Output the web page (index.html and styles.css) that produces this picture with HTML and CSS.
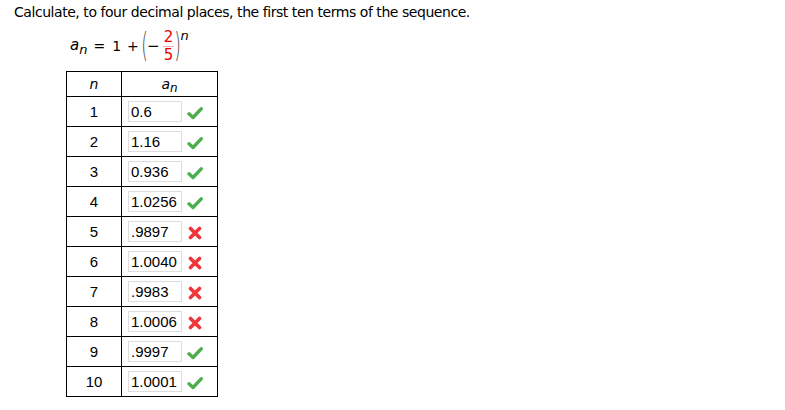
FILE: index.html
```html
<!DOCTYPE html>
<html>
<head>
<meta charset="utf-8">
<link rel="stylesheet" href="styles.css">
</head>
<body>
<p class="prompt">Calculate, to four decimal places, the first ten terms of the sequence.</p>
<div class="formula">
  <span class="var">a<sub>n</sub></span>
  <span class="op eq">=</span>
  <span class="one">1</span>
  <span class="op plus">+</span>
  <span class="paren lp">(</span>
  <span class="minus">−</span>
  <span class="frac"><span class="num">2</span><span class="den">5</span></span>
  <span class="paren rp">)</span>
  <sup class="exp">n</sup>
</div>
<table class="seq">
  <thead>
    <tr><th class="ncol"><i>n</i></th><th class="acol"><i>a</i><sub><i>n</i></sub></th></tr>
  </thead>
  <tbody>
    <tr><td>1</td><td><div class="cell"><span class="box">0.6</span><svg class="ok" viewBox="0 0 16 14"><path d="M2 7.8 L6 11.5 L14.2 2.8" /></svg></div></td></tr>
    <tr><td>2</td><td><div class="cell"><span class="box">1.16</span><svg class="ok" viewBox="0 0 16 14"><path d="M2 7.8 L6 11.5 L14.2 2.8" /></svg></div></td></tr>
    <tr><td>3</td><td><div class="cell"><span class="box">0.936</span><svg class="ok" viewBox="0 0 16 14"><path d="M2 7.8 L6 11.5 L14.2 2.8" /></svg></div></td></tr>
    <tr><td>4</td><td><div class="cell"><span class="box">1.0256</span><svg class="ok" viewBox="0 0 16 14"><path d="M2 7.8 L6 11.5 L14.2 2.8" /></svg></div></td></tr>
    <tr><td>5</td><td><div class="cell"><span class="box">.9897</span><svg class="bad" viewBox="0 0 14 14"><path d="M2.5 2.5 L11.5 11.5 M11.5 2.5 L2.5 11.5" /></svg></div></td></tr>
    <tr><td>6</td><td><div class="cell"><span class="box">1.0040</span><svg class="bad" viewBox="0 0 14 14"><path d="M2.5 2.5 L11.5 11.5 M11.5 2.5 L2.5 11.5" /></svg></div></td></tr>
    <tr><td>7</td><td><div class="cell"><span class="box">.9983</span><svg class="bad" viewBox="0 0 14 14"><path d="M2.5 2.5 L11.5 11.5 M11.5 2.5 L2.5 11.5" /></svg></div></td></tr>
    <tr><td>8</td><td><div class="cell"><span class="box">1.0006</span><svg class="bad" viewBox="0 0 14 14"><path d="M2.5 2.5 L11.5 11.5 M11.5 2.5 L2.5 11.5" /></svg></div></td></tr>
    <tr><td>9</td><td><div class="cell"><span class="box">.9997</span><svg class="ok" viewBox="0 0 16 14"><path d="M2 7.8 L6 11.5 L14.2 2.8" /></svg></div></td></tr>
    <tr><td>10</td><td><div class="cell"><span class="box">1.0001</span><svg class="ok" viewBox="0 0 16 14"><path d="M2 7.8 L6 11.5 L14.2 2.8" /></svg></div></td></tr>
  </tbody>
</table>
</body>
</html>
```
FILE: styles.css
```css
html, body {
  margin: 0;
  padding: 0;
  background: #fff;
  color: #000;
  font-family: "DejaVu Sans", Verdana, sans-serif;
}
.prompt {
  margin: 0;
  padding: 3px 0 0 14px;
  height: 18px;
  font-size: 14px;
  line-height: 18px;
  letter-spacing: -0.45px;
}
.formula {
  display: flex;
  align-items: center;
  height: 44px;
  padding-left: 70px;
  margin-top: 3px;
  font-size: 14px;
}
.formula .var {
  font-style: italic;
  font-size: 15px;
}
.formula sub {
  font-size: 13px;
  vertical-align: -4px;
}
.formula .eq { margin-left: 6px; }
.formula .one { margin-left: 7px; }
.formula .plus { margin-left: 6px; }
.formula .paren {
  font-size: 34px;
  font-weight: 300;
  color: #444;
  transform: scaleX(0.5);
  line-height: 1;
}
.formula .lp { margin: -2px -4px 0 -1px; }
.formula .rp { margin: -2px -3px 0 -3px; }
.formula .minus { font-size: 15px; }
.formula .frac {
  display: inline-flex;
  flex-direction: column;
  align-items: center;
  color: #e00;
  font-size: 15px;
  line-height: 16px;
  margin-left: 3px;
  margin-top: -1px;
}
.formula .num {
  border-bottom: 1px solid #f4b0b0;
  padding: 0 1px 1px;
}
.formula .exp {
  font-style: italic;
  font-size: 13px;
  align-self: flex-start;
  margin-top: 4px;
  margin-left: -1px;
}
.seq {
  margin: 3px 0 0 66px;
  border-collapse: collapse;
  font-family: "Liberation Sans", Arial, sans-serif;
  font-size: 15px;
}
.seq th, .seq td {
  border: 1px solid #000;
  padding: 0;
  height: 29px;
  text-align: center;
}
.seq th {
  height: 24px;
  line-height: 14px;
  font-weight: normal;
  font-family: "DejaVu Sans", Verdana, sans-serif;
  font-size: 14px;
}
.seq th sub {
  font-size: 12px;
  line-height: 0;
  vertical-align: -3px;
}
.ncol { width: 54px; }
.acol { width: 95px; }
.cell {
  display: flex;
  align-items: center;
  padding-left: 6px;
  gap: 5px;
}
.box {
  display: block;
  width: 50px;
  height: 19px;
  line-height: 19px;
  border: 1px solid #ddd;
  text-align: left;
  padding-left: 2px;
}
.ok {
  width: 16px;
  height: 14px;
  margin-top: 3px;
}
.ok path {
  fill: none;
  stroke: #4cae4c;
  stroke-width: 3.4;
  stroke-linecap: round;
  stroke-linejoin: round;
}
.bad {
  width: 14px;
  height: 14px;
  margin-top: 3px;
  margin-left: 1px;
}
.bad path {
  fill: none;
  stroke: #f0343a;
  stroke-width: 3.6;
  stroke-linecap: round;
}
```
